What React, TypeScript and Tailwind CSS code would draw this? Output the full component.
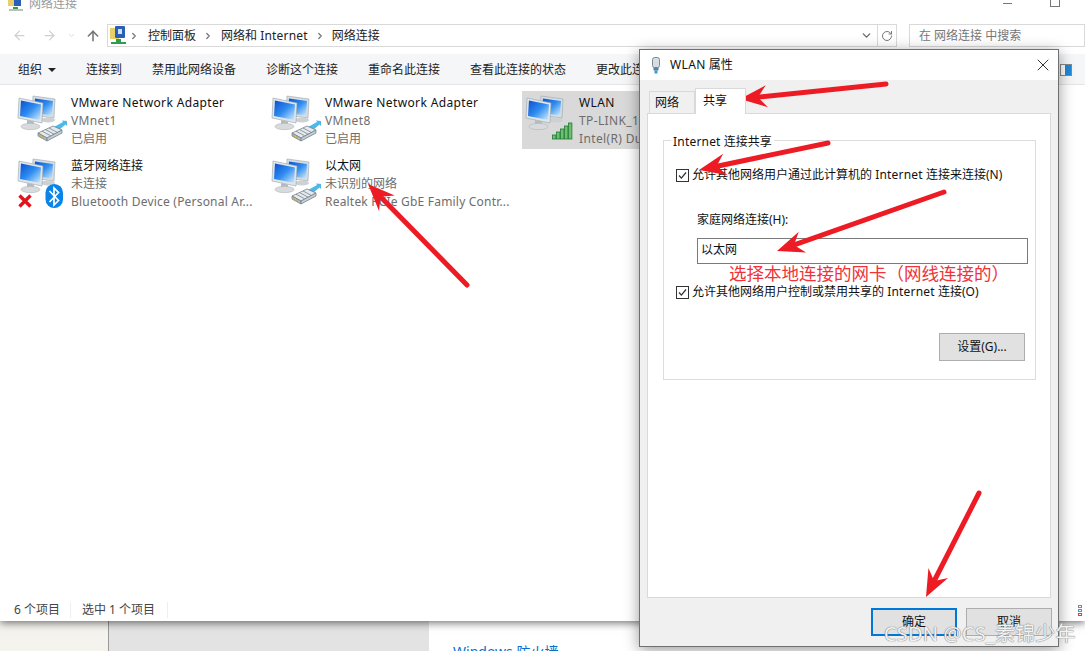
import { ArrowLeft, ArrowRight, ArrowUp, ChevronDown, ChevronRight, RotateCw, X } from "lucide-react";

const FONT = "font-['Noto_Sans','Noto_Sans_CJK_SC',sans-serif]";

function Arrow({ from, to }: { from: [number, number]; to: [number, number] }) {
  const dx = to[0] - from[0];
  const dy = to[1] - from[1];
  const len = Math.hypot(dx, dy);
  const ux = dx / len;
  const uy = dy / len;
  const nx = -uy;
  const ny = ux;
  const at = (back: number, side: number) =>
    `${to[0] - ux * back + nx * side},${to[1] - uy * back + ny * side}`;
  return (
    <>
      <line
        x1={from[0]}
        y1={from[1]}
        x2={to[0] - ux * 16}
        y2={to[1] - uy * 16}
        stroke="#ed1c24"
        strokeWidth={5}
        strokeLinecap="round"
      />
      <polygon
        points={`${at(0, 0)} ${at(27, 11)} ${at(18, 0)} ${at(27, -11)}`}
        fill="#ed1c24"
      />
    </>
  );
}

function NetIcon({ kind, uid }: { kind: "plug" | "wifi" | "bt"; uid: string }) {
  const id = `scr-${uid}`;
  return (
    <svg width="48" height="48" viewBox="0 0 48 48" className="shrink-0 overflow-visible">
      <defs>
        <linearGradient id={id} x1="0" y1="0" x2="1" y2="1">
          <stop offset="0" stopColor="#0a4fd0" />
          <stop offset="0.5" stopColor="#2f8df0" />
          <stop offset="1" stopColor="#d6eefc" />
        </linearGradient>
      </defs>
      {/* back monitor */}
      <polygon points="15,0 37,3 36,22 14,19" fill="#d5dde2" stroke="#9aa5ac" strokeWidth="0.6" />
      <polygon points="17,2.5 35,5 34,19.5 16,17" fill={`url(#${id})`} />
      <ellipse cx="30" cy="24" rx="7" ry="2.5" fill="#cdd1d3" />
      {/* front monitor */}
      <polygon points="1,2 25,7 24,27 0,22" fill="#e0e6ea" stroke="#98a3aa" strokeWidth="0.6" />
      <polygon points="3,4.5 23,8.5 22,24 2,20" fill={`url(#${id})`} />
      <polygon points="9,24 16,25.5 16,29 9,28" fill="#b5babd" />
      <ellipse cx="12.5" cy="30.5" rx="9.5" ry="3.2" fill="#d8dbdd" stroke="#a9adaf" strokeWidth="0.5" />
      {kind === "plug" && (
        <g>
          <polygon points="36,31 45,26 44,24.5 49,25 49,30 47.5,28.5 41,34" fill="#4fb8e8" />
          <polygon points="20,37 35,30 44,34 29,42" fill="#e4eaee" stroke="#76838b" strokeWidth="0.8" />
          <polygon points="20,37 29,42 29,45 20,40" fill="#b4bec4" stroke="#76838b" strokeWidth="0.8" />
          <polygon points="29,42 44,34 44,37 29,45" fill="#c4ced4" stroke="#76838b" strokeWidth="0.8" />
          <path d="M24 35.2l8.5 4.5M27.5 33.6l8.5 4.5M31 32l8.5 4.5" stroke="#76838b" strokeWidth="0.8" />
          <path d="M21.5 38.5l1 3M24.5 40l1 3" stroke="#c9a23a" strokeWidth="1" />
        </g>
      )}
      {kind === "wifi" && (
        <g fill="#6cc06e" stroke="#1f7a35" strokeWidth="0.8">
          <rect x="26.5" y="39" width="3.4" height="4" />
          <rect x="30.5" y="36" width="3.4" height="7" />
          <rect x="34.5" y="33" width="3.4" height="10" />
          <rect x="38.5" y="30" width="3.4" height="13" />
          <rect x="42.5" y="27" width="3.4" height="16" />
        </g>
      )}
      {kind === "bt" && (
        <g>
          <rect x="27.5" y="25" width="17.5" height="24" rx="8.7" fill="#0a84e8" />
          <path
            d="M31.5 32l9 9.5-4.5 4.5V29l4.5 4.5-9 9.5"
            fill="none"
            stroke="#fff"
            strokeWidth="1.7"
          />
          <path d="M1.5 36.5l11 11M12.5 36.5l-11 11" stroke="#e0141c" strokeWidth="3.4" />
        </g>
      )}
    </svg>
  );
}

function Latin({ tight, children }: { tight?: boolean; children: React.ReactNode }) {
  return <span className={tight ? "tracking-[0.2px]" : "tracking-[0.36px]"}>{children}</span>;
}

function Adapter({
  kind,
  uid,
  name,
  status,
  device,
  selected,
}: {
  kind: "plug" | "wifi" | "bt";
  uid: string;
  name: React.ReactNode;
  status?: React.ReactNode;
  device: React.ReactNode;
  selected?: boolean;
}) {
  return (
    <div className={`flex h-[58px] items-center pl-1 ${selected ? "bg-[#d9d9d9]" : ""}`}>
      <NetIcon kind={kind} uid={uid} />
      <div className="ml-[5px] flex flex-col whitespace-nowrap pt-[2px] text-xs leading-[18px]">
        <div className="text-[#111]">{name}</div>
        <div className="text-[#6d6d6d]">{status}</div>
        <div className="text-[#6d6d6d]">{device}</div>
      </div>
    </div>
  );
}

function Check() {
  return (
    <span className="flex h-[13px] w-[13px] shrink-0 items-center justify-center border border-[#333] bg-white">
      <svg width="11" height="11" viewBox="0 0 11 11">
        <path d="M2 5.5l2.4 2.6L9 2.5" fill="none" stroke="#333" strokeWidth="1.3" />
      </svg>
    </span>
  );
}

function Explorer() {
  return (
    <div className="absolute left-0 top-0 flex h-[621px] w-[1085px] flex-col bg-white shadow-[0_2px_8px_rgba(0,0,0,0.55)]">
      {/* Title */}
      <div className="flex h-6 shrink-0 items-start pl-2 text-xs">
        <svg width="16" height="11" viewBox="0 0 16 11" className="mr-[5px]">
          <rect x="0" y="0" width="8" height="6" fill="#e8cf6a" />
          <rect x="6" y="0" width="7" height="6" fill="#2a5fb8" />
          <rect x="5" y="7" width="5" height="2" fill="#2f9e4a" />
          <rect x="1" y="9" width="14" height="2" fill="#b9c2b9" />
        </svg>
        <span className="-mt-[4px] text-[#9a9a9a]">网络连接</span>
        <div className="ml-auto flex items-start pr-[25px]">
          <span className="mr-[38px] mt-[3px] h-px w-[9px] bg-[#777]" />
          <span className="-mt-px h-[8px] w-[10px] border border-[#777]" />
        </div>
      </div>

      {/* Address row */}
      <div className="flex h-[23px] shrink-0 items-center text-xs">
        <div className="flex w-[107px] items-center pl-[12px]">
          <ArrowLeft size={15} className="text-[#d0d0d0]" />
          <ArrowRight size={15} className="ml-[15px] text-[#d0d0d0]" />
          <ChevronDown size={9} className="ml-[10px] text-[#d0d0d0]" />
          <ArrowUp size={16} strokeWidth={2.4} className="ml-[9px] text-[#777]" />
        </div>
        <div className="flex h-full w-[790px] items-center border border-[#d9d9d9] pl-[2px]">
          <svg width="17" height="19" viewBox="0 0 17 19">
            <rect x="0" y="2" width="9" height="11" fill="#e8cf6a" />
            <rect x="5" y="0" width="10" height="12" rx="1" fill="#2a5fb8" />
            <rect x="8" y="3" width="4" height="5" fill="#cfe0f5" />
            <rect x="6" y="13" width="5" height="3" fill="#2f9e4a" />
            <rect x="1" y="16" width="15" height="2" fill="#2f9e4a" />
          </svg>
          <ChevronRight size={10} strokeWidth={3} className="ml-[2px] text-[#777]" />
          <span className="ml-[9px] text-[#222]">控制面板</span>
          <ChevronRight size={10} strokeWidth={3} className="ml-[7px] text-[#777]" />
          <span className="ml-[8px] text-[#222]">
            网络和 <Latin tight>Internet</Latin>
          </span>
          <ChevronRight size={10} strokeWidth={3} className="ml-[7px] text-[#777]" />
          <span className="ml-[7px] text-[#222]">网络连接</span>
          <ChevronDown size={13} strokeWidth={2.4} className="ml-auto mr-[4px] text-[#666]" />
          <div className="flex h-full w-[19px] items-center justify-center border-l border-[#d9d9d9]">
            <RotateCw size={12} className="text-[#777]" />
          </div>
        </div>
        <div className="ml-[12px] flex h-full flex-1 items-center border border-[#d9d9d9] pl-[9px] text-[#777]">
          在 网络连接 中搜索
        </div>
      </div>

      {/* Toolbar */}
      <div className="mt-[7px] flex h-[31px] shrink-0 items-center border-b border-[#e5e5e5] bg-[#f5f6f7] pl-[18px] pt-[2px] text-xs text-[#222]">
        <span>组织</span>
        <span className="ml-[6px] h-0 w-0 border-x-[4px] border-t-[4px] border-x-transparent border-t-[#222]" />
        <span className="ml-[30px]">连接到</span>
        <span className="ml-[30px]">禁用此网络设备</span>
        <span className="ml-[30px]">诊断这个连接</span>
        <span className="ml-[30px]">重命名此连接</span>
        <span className="ml-[30px]">查看此连接的状态</span>
        <span className="ml-[30px]">更改此连接</span>
        <svg width="12" height="12" viewBox="0 0 12 12" className="ml-auto mr-[13px]">
          <rect x="0.5" y="0.5" width="11" height="11" fill="#fff" stroke="#888" />
          <rect x="5" y="1" width="6" height="10" fill="#1e88d8" />
        </svg>
      </div>

      {/* Adapters */}
      <div className="grid grid-cols-[254px_254px_254px] gap-y-[5px] pl-[14px] pt-[6px]">
        <Adapter kind="plug" uid="a" name={<Latin>VMware Network Adapter</Latin>} status={<Latin>VMnet1</Latin>} device="已启用" />
        <Adapter kind="plug" uid="b" name={<Latin>VMware Network Adapter</Latin>} status={<Latin>VMnet8</Latin>} device="已启用" />
        <Adapter kind="wifi" uid="c" name={<Latin>WLAN</Latin>} status={<Latin>TP-LINK_1C</Latin>} device={<Latin>Intel(R) Dual Band</Latin>} selected />
        <Adapter kind="bt" uid="d" name="蓝牙网络连接" status="未连接" device={<Latin tight>Bluetooth Device (Personal Ar...</Latin>} />
        <Adapter kind="plug" uid="e" name="以太网" status="未识别的网络" device={<Latin tight>Realtek PCIe GbE Family Contr...</Latin>} />
      </div>

      {/* Status bar */}
      <div className="mt-auto flex h-[24px] shrink-0 items-center pl-[14px] pt-[2px] text-xs text-[#444]">
        <span className="w-[57px] border-r border-[#eee]">6 个项目</span>
        <span className="ml-[11px] w-[86px] border-r border-[#eee]">选中 1 个项目</span>
        <div className="ml-auto mr-[3px] flex flex-col gap-px">
          <span className="h-[3px] w-[4px] border border-[#888]" />
          <span className="h-[3px] w-[4px] border border-[#4a8fe0]" />
          <span className="h-[3px] w-[4px] border border-[#d04040]" />
        </div>
      </div>
    </div>
  );
}

function Dialog() {
  return (
    <div className="absolute left-[639px] top-[49px] flex h-[598px] w-[420px] flex-col border border-[#707070] bg-[#f0f0f0] text-xs text-[#111] shadow-[0_3px_14px_rgba(0,0,0,0.4)]">
      <div className="flex h-[30px] shrink-0 items-center bg-white pl-[11px]">
        <svg width="10" height="17" viewBox="0 0 10 17">
          <rect x="1.5" y="0.5" width="7" height="10" rx="2" fill="#d5dde3" stroke="#7d8a94" />
          <rect x="2.5" y="10.5" width="5" height="3" fill="#5f7e9c" />
          <rect x="3.5" y="13.5" width="3" height="3" fill="#2d9fd3" />
        </svg>
        <span className="ml-[9px]">
          <Latin>WLAN</Latin> 属性
        </span>
        <X size={20} strokeWidth={1.1} className="ml-auto mr-[5px] text-[#222]" />
      </div>

      {/* Tabs */}
      <div className="flex h-[33px] shrink-0 items-end pl-[9px] pt-[9px]">
        <div className="flex h-[22px] w-[46px] items-center border border-b-0 border-[#d9d9d9] bg-[#f0f0f0] pl-[5px]">
          网络
        </div>
        <div className="relative z-10 -mb-px flex h-[26px] w-[51px] items-center border border-b-0 border-[#d9d9d9] bg-white pb-[2px] pl-[7px]">
          共享
        </div>
      </div>

      {/* Panel */}
      <div className="mx-[7px] flex-1 border border-[#d9d9d9] bg-white pl-[15px] pr-[14px] pt-[26px]">
        <div className="relative h-[240px] border border-[#dcdcdc] pl-[12px] pr-[10px] pt-[26px]">
          <span className="absolute -top-[7px] left-[7px] bg-white px-[2px]">
            <Latin tight>Internet</Latin> 连接共享
          </span>
          <div className="flex items-center">
            <Check />
            <span className="ml-[3px] whitespace-nowrap">
              允许其他网络用户通过此计算机的 <Latin tight>Internet</Latin> 连接来连接(N)
            </span>
          </div>
          <div className="ml-[21px] mt-[29px] leading-[16px]">家庭网络连接(H):</div>
          <div className="ml-[21px] mt-[10px] flex h-[26px] w-[331px] items-center border border-[#7a7a7a] pb-[2px] pl-[3px]">
            以太网
          </div>
          <div className="mt-[20px] flex items-center">
            <Check />
            <span className="ml-[3px] whitespace-nowrap">
              允许其他网络用户控制或禁用共享的 <Latin tight>Internet</Latin> 连接(O)
            </span>
          </div>
          <div className="mt-[33px] flex justify-end">
            <button className="h-[28px] w-[86px] border border-[#adadad] bg-[#e1e1e1] text-xs">设置(G)...</button>
          </div>
        </div>
      </div>

      {/* Footer */}
      <div className="flex h-[48px] shrink-0 items-start justify-end gap-[9px] pr-[6px] pt-[10px]">
        <button className="h-[28px] w-[86px] border-[2px] border-[#0078d7] bg-[#e1e1e1] text-xs">确定</button>
        <button className="h-[28px] w-[86px] border border-[#adadad] bg-[#e1e1e1] text-xs">取消</button>
      </div>
    </div>
  );
}

export default function App() {
  return (
    <div className={`relative flex h-[651px] w-[1085px] overflow-hidden bg-white ${FONT}`}>
      {/* Desktop windows behind */}
      <div className="h-full w-[108px] bg-[#f5f3ee]" />
      <div className="h-full w-[321px] border-l border-[#999] bg-[#e3e3e3]" />
      <div className="flex h-full flex-1 flex-col justify-end pl-6">
        <span className="-mb-[11px] text-sm leading-5 text-[#0a6fc9]">Windows 防火墙</span>
      </div>

      <Explorer />
      <Dialog />

      {/* Annotations */}
      <svg width="1085" height="651" viewBox="0 0 1085 651" className="pointer-events-none absolute inset-0">
        <Arrow from={[886, 84]} to={[740, 99]} />
        <Arrow from={[828, 143]} to={[699, 170]} />
        <Arrow from={[944, 192]} to={[777, 251]} />
        <Arrow from={[979, 493]} to={[926, 597]} />
        <Arrow from={[467, 285]} to={[368, 184]} />
      </svg>
      <span className="absolute left-[729px] top-[261px] whitespace-nowrap text-[17.5px] leading-6 text-[#f0323a]">
        选择本地连接的网卡（网线连接的）
      </span>
      <span className="absolute left-[884px] top-[622px] whitespace-nowrap text-[20px] leading-6 tracking-[0.2px] text-[#f2f2f2] [text-shadow:0_0_1px_#777,0_0_1px_#777]">
        CSDN @CS_素锦少年
      </span>
    </div>
  );
}
